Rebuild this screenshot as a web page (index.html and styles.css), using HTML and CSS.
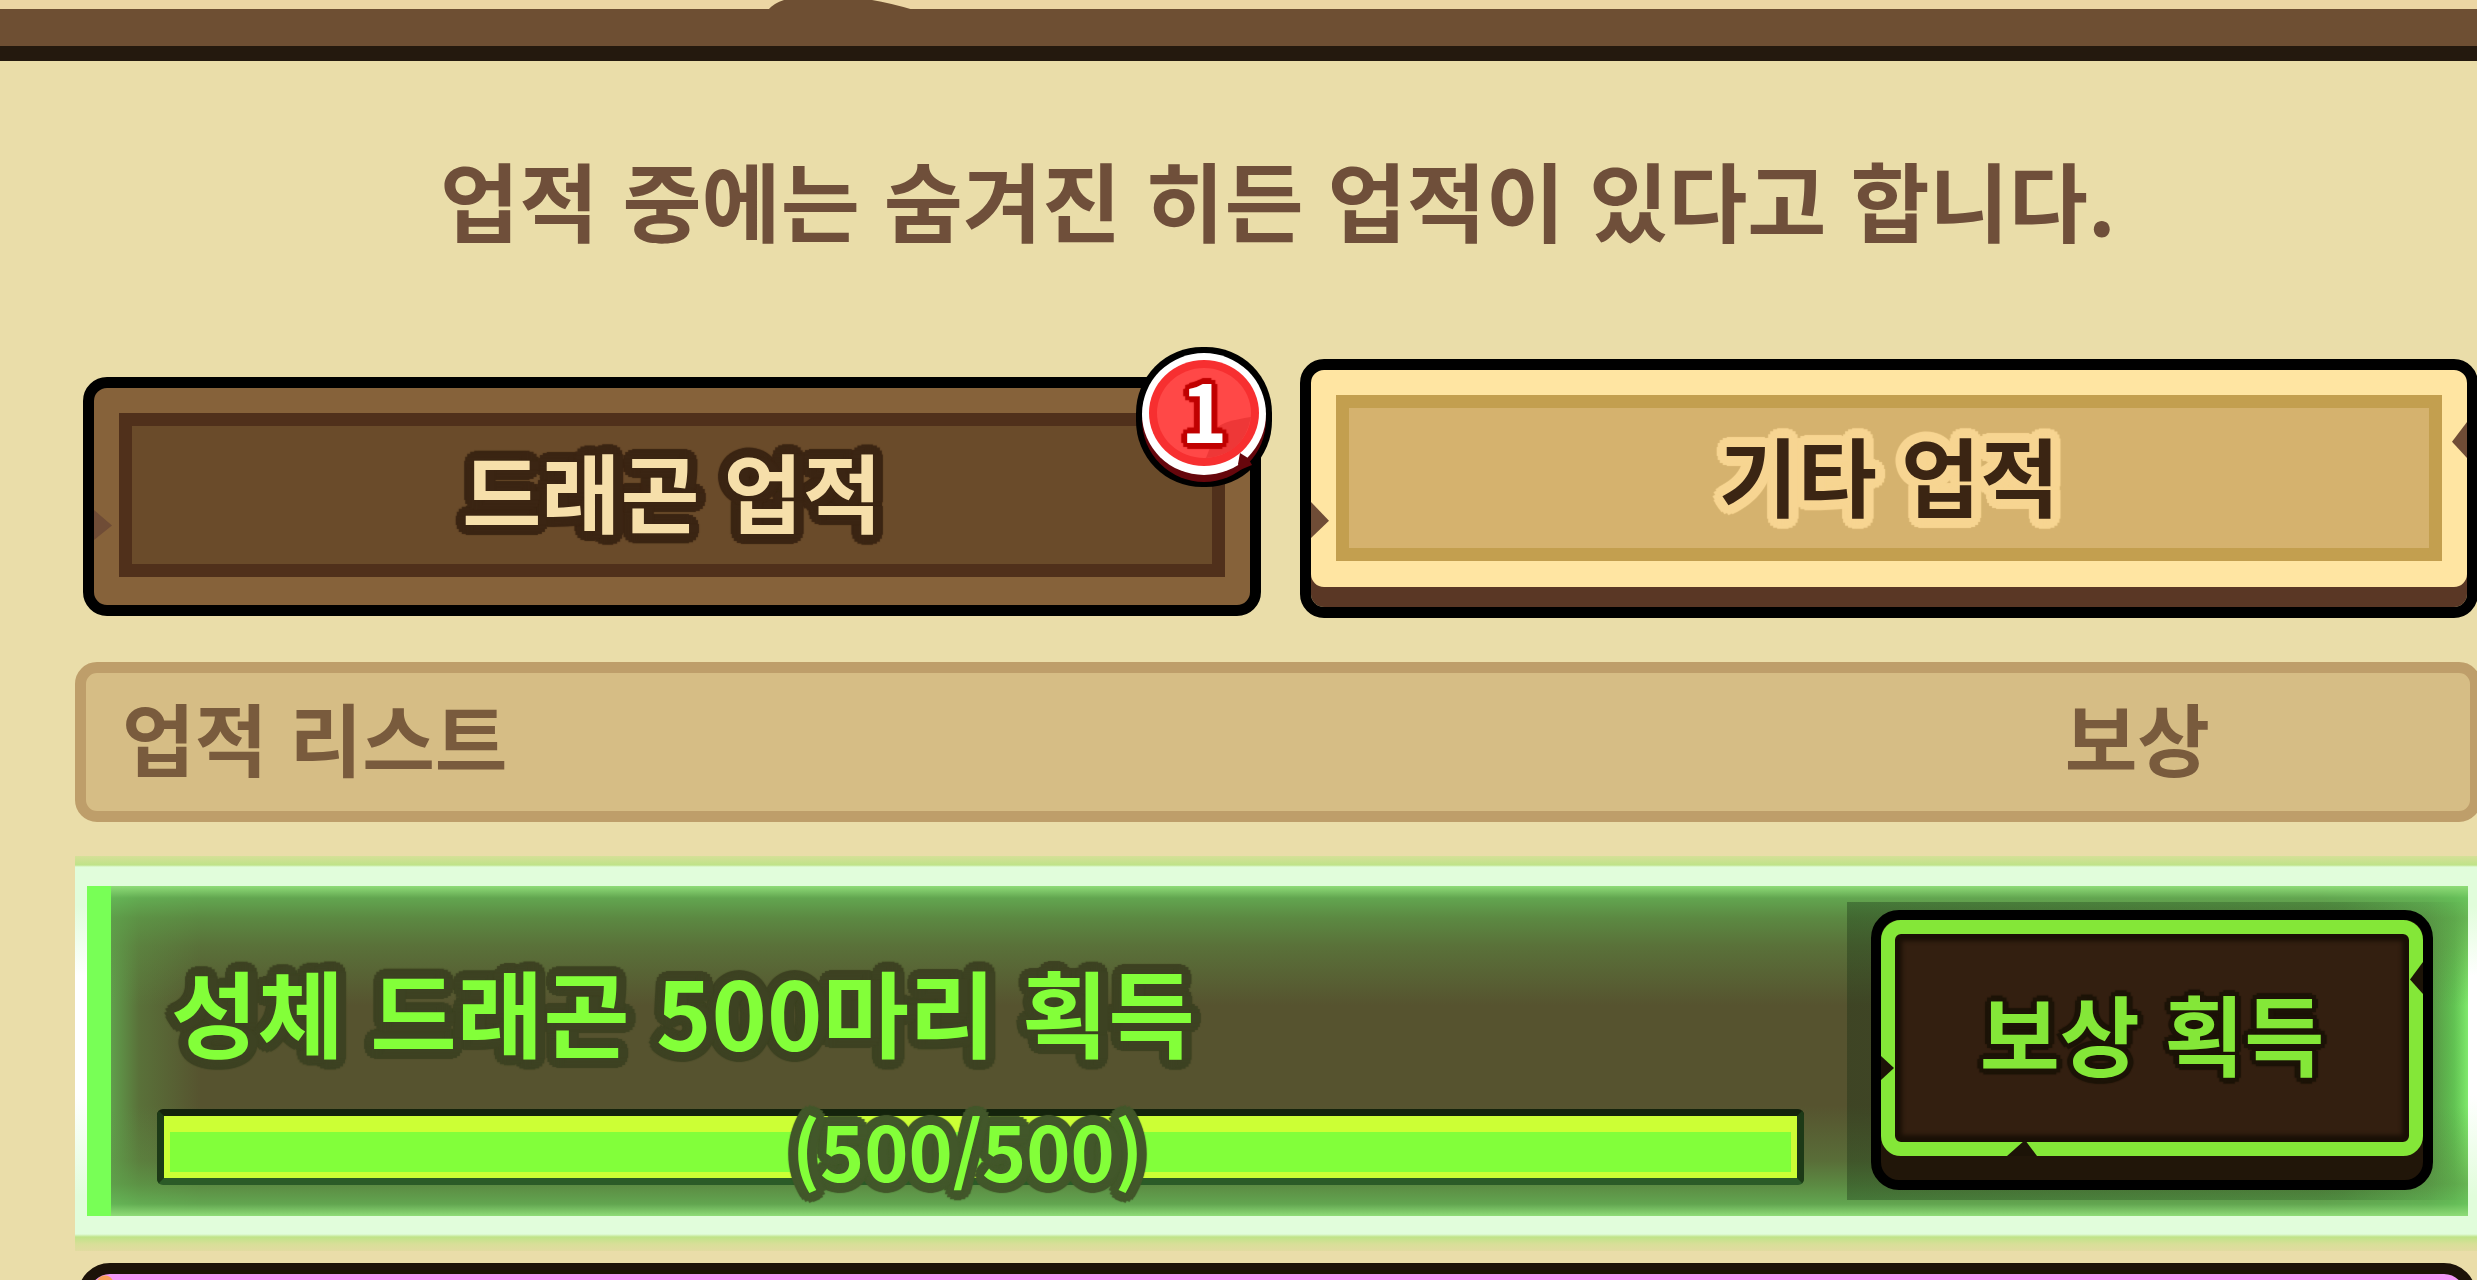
FILE: index.html
```
<!DOCTYPE html>
<html lang="ko">
<head>
    <meta charset="UTF-8">
    <meta name="viewport" content="width=device-width, initial-scale=1.0">
    <title>업적</title>
    <link rel="stylesheet" href="styles.css">
</head>
<body>
    <div class="screen">
        <header class="top-bar">
            <svg class="top-bump" width="150" height="10" viewBox="0 0 150 10">
                <path d="M0 10 Q6 3 16 0 H104 Q122 3 146 10 Z" fill="#6e4f33"/>
            </svg>
        </header>

        <main class="content">
            <p class="notice">업적 중에는 숨겨진 히든 업적이 있다고 합니다.</p>

            <div class="tabs" role="tablist">
                <button type="button" class="tab tab-dark" role="tab" aria-selected="false">
                    <span class="tab-face outline">드래곤 업적</span>
                    <span class="badge">
                        <svg class="badge-bg" width="136" height="140" viewBox="0 0 136 140">
                            <rect width="136" height="140" rx="66" fill="#000"/>
                            <ellipse cx="68" cy="73" rx="62" ry="62" fill="#66060c"/>
                            <ellipse cx="68" cy="67" rx="62" ry="61" fill="#fff"/>
                            <ellipse cx="68" cy="66" rx="55" ry="53" fill="#f72f30"/>
                            <ellipse cx="68" cy="66" rx="47" ry="45" fill="#ff4847"/>
                            <path d="M115 70 Q88 74 82 80 L70 111 Q108 108 115 70 Z" fill="#ee3737"/>
                            <path d="M104 106 L112 111 L116 118 L104 123 L102 117 Z" fill="#66060c"/>
                        </svg>
                        <span class="badge-num outline-thin">1</span>
                    </span>
                </button>
                <button type="button" class="tab tab-light" role="tab" aria-selected="true">
                    <span class="tab-face outline">기타 업적</span>
                </button>
            </div>

            <div class="list-head">
                <span>업적 리스트</span>
                <span class="head-reward">보상</span>
            </div>

            <section class="item">
                <div class="item-body">
                    <div class="item-info">
                        <h2 class="item-title outline">성체 드래곤 500마리 획득</h2>
                        <div class="progress" role="progressbar" aria-valuemin="0" aria-valuemax="500" aria-valuenow="500">
                            <div class="progress-fill" style="width: 100%"></div>
                            <span class="progress-text outline">(500/500)</span>
                        </div>
                    </div>
                    <div class="item-reward">
                        <button type="button" class="claim-btn">
                            <span class="claim-face outline-thin">보상 획득</span>
                        </button>
                    </div>
                </div>
            </section>

            <section class="next-item"></section>
        </main>
    </div>
</body>
</html>
```

FILE: styles.css
```
* {
    box-sizing: border-box;
    margin: 0;
    padding: 0;
}

body {
    font-family: 'Noto Sans CJK KR', 'Noto Sans', sans-serif;
    font-weight: 700;
    background-color: #eadda9;
}

button {
    font-family: inherit;
    font-weight: inherit;
    cursor: pointer;
}

/* rounded text outlines, coloured by --edge */
.outline {
    text-shadow:
        10px 0 1px var(--edge), 9px 4px 1px var(--edge),
        7px 7px 1px var(--edge), 4px 9px 1px var(--edge),
        0 10px 1px var(--edge), -4px 9px 1px var(--edge),
        -7px 7px 1px var(--edge), -9px 4px 1px var(--edge),
        -10px 0 1px var(--edge), -9px -4px 1px var(--edge),
        -7px -7px 1px var(--edge), -4px -9px 1px var(--edge),
        0 -10px 1px var(--edge), 4px -9px 1px var(--edge),
        7px -7px 1px var(--edge), 9px -4px 1px var(--edge),
        5px 0 var(--edge), -5px 0 var(--edge),
        0 5px var(--edge), 0 -5px var(--edge),
        4px 4px var(--edge), -4px 4px var(--edge),
        -4px -4px var(--edge), 4px -4px var(--edge);
}

.outline-thin {
    text-shadow:
        6px 0 1px var(--edge), 4px 4px 1px var(--edge),
        0 6px 1px var(--edge), -4px 4px 1px var(--edge),
        -6px 0 1px var(--edge), -4px -4px 1px var(--edge),
        0 -6px 1px var(--edge), 4px -4px 1px var(--edge);
}

.screen {
    height: 100vh;
    overflow: hidden;
}

.top-bar {
    position: relative;
    height: 61px;
    border-top: 9px solid #ecd6a4;
    border-bottom: 15px solid #24190e;
    background-color: #6e4f33;
}

.top-bump {
    position: absolute;
    top: -9px;
    left: 31%;
}

/* the list runs slightly past the right edge */
.content {
    margin: 0 -4px 0 75px;
}

.notice {
    padding: 74px 0 96px;
    font-size: 86px;
    line-height: 128px;
    text-align: center;
    color: #6f4f3a;
}

/* tabs */
.tabs {
    display: grid;
    grid-template-columns: 1fr 1fr;
    align-items: end;
    gap: 39px;
    padding: 0 3px 0 8px;
}

.tab {
    position: relative;
    padding: 25px;
    border: 11px solid #000;
    border-radius: 24px;
}

.tab-face {
    display: block;
    padding: 2px 0 10px;
    border: 13px solid;
    font-size: 86px;
    line-height: 128px;
}

.tab-dark {
    margin-bottom: 2px;
    padding-bottom: 28px;
    background-color: #86623a;
}

.tab-dark .tab-face {
    --edge: #3b2513;
    padding: 0 0 10px;
    border-color: #50301b;
    background-color: #6a4b2a;
    color: #f6dfaa;
}

.tab-light {
    padding-bottom: 46px;
    background-color: #ffe5a2;
    box-shadow: inset 0 -20px 0 #5a3725;
}

.tab-light .tab-face {
    --edge: #f7d592;
    border-color: #c39f4f;
    background-color: #d5b26e;
    color: #3b2513;
}

/* chips in the wood */
.tab::before,
.tab-light::after {
    content: '';
    position: absolute;
    top: 132px;
    left: 0;
    width: 18px;
    height: 36px;
    background-color: #6f4c36;
    clip-path: polygon(0 0, 100% 52%, 0 100%);
}

.tab-dark::before {
    top: 122px;
    height: 30px;
}

.tab-light::after {
    top: 52px;
    left: auto;
    right: 0;
    width: 15px;
    clip-path: polygon(100% 0, 0 55%, 100% 100%);
}

.badge {
    position: absolute;
    top: -41px;
    right: -22px;
    width: 136px;
    height: 140px;
}

.badge-bg {
    display: block;
}

.badge-num {
    --edge: #c00000;
    position: absolute;
    top: 0;
    left: 0;
    width: 100%;
    font-size: 79px;
    line-height: 124px;
    text-align: center;
    color: #fff;
}

/* list */
.list-head {
    display: flex;
    justify-content: space-between;
    margin-top: 44px;
    padding: 0 260px 10px 36px;
    border: 11px solid #be9e6a;
    border-radius: 22px;
    background-color: #d6bd85;
    font-size: 79px;
    line-height: 128px;
    color: #795b3d;
}

.item {
    margin-top: 34px;
    padding: 30px 13px 35px 12px;
    background: linear-gradient(to bottom,
        #d6e098 0,
        #bfe388 9px,
        #e1fddb 11px,
        #e1fddb 50px,
        #ffffff 120px,
        #ffffff 240px,
        #e1fddb 340px,
        #e1fddb 378px,
        #bfe388 381px,
        #d8df98 388px,
        #e1dba0 395px);
}

.item-body {
    display: flex;
    height: 330px;
    border-left: 24px solid #78ff56;
    background:
        linear-gradient(to bottom, #8fdc78 0, rgba(101, 186, 88, 0.8) 12px, rgba(94, 160, 74, 0.7) 32px, rgba(94, 150, 70, 0.45) 60px, transparent 120px),
        linear-gradient(to top, #8fdc78 0, rgba(101, 186, 88, 0.8) 12px, rgba(94, 160, 74, 0.7) 32px, rgba(94, 150, 70, 0.4) 55px, transparent 110px),
        linear-gradient(to right, rgba(101, 190, 88, 0.7) 0, rgba(94, 150, 70, 0.45) 28px, transparent 90px),
        linear-gradient(to left, #7ee86a 0, rgba(101, 210, 88, 0.9) 14px, rgba(94, 180, 80, 0.7) 40px, transparent 150px),
        #56532f;
}

.item-info {
    flex: 1;
    padding: 60px 43px 0 46px;
}

.item-title {
    --edge: #3d4222;
    padding-left: 14px;
    font-size: 94px;
    line-height: 128px;
    color: #83ff39;
}

.progress {
    position: relative;
    height: 76px;
    margin-top: 35px;
    border: 7px solid #1d3a17;
    border-color: #14230c #1d3a17 #2b5b27;
    border-radius: 6px;
    background-color: #1d3a17;
}

.progress-fill {
    height: 100%;
    border: 6px solid #ccff35;
    border-top-width: 16px;
    background-color: #82ff3a;
}

.progress-text {
    --edge: #42572a;
    position: absolute;
    top: -30px;
    left: 0;
    width: 100%;
    padding-right: 26px;
    font-size: 75px;
    line-height: 128px;
    text-align: center;
    color: #83ff39;
}

.item-reward {
    width: 621px;
    margin: 16px 0;
    padding: 8px 35px 8px 24px;
    background: linear-gradient(to right, rgba(16, 40, 16, 0.34), rgba(16, 60, 16, 0.22) 80%, transparent);
}

.claim-btn {
    position: relative;
    display: block;
    width: 100%;
    padding: 0 0 24px;
    border: 10px solid #000;
    border-radius: 28px;
    background-color: #211609;
}

.claim-face {
    --edge: #1c1307;
    display: block;
    padding: 34px 0 46px;
    border: 14px solid #84e738;
    border-radius: 20px;
    background-color: #331f10;
    box-shadow: inset 0 0 4px 7px #1a1006;
    font-size: 87px;
    line-height: 128px;
    color: #84e738;
}

.claim-btn::before,
.claim-btn::after {
    content: '';
    position: absolute;
    top: 136px;
    left: 0;
    width: 13px;
    height: 24px;
    background-color: #1c1307;
    clip-path: polygon(0 0, 100% 50%, 0 100%);
}

.claim-btn::after {
    top: 42px;
    left: auto;
    right: 0;
    height: 32px;
    clip-path: polygon(100% 0, 0 55%, 100% 100%);
}

.claim-face::after {
    content: '';
    position: absolute;
    bottom: 24px;
    left: 126px;
    width: 30px;
    height: 16px;
    background-color: #1c1307;
    clip-path: polygon(0 100%, 60% 0, 100% 100%);
}

.next-item {
    height: 395px;
    margin: 12px 5px 0 3px;
    border: 11px solid #1c1208;
    border-radius: 32px;
    background: radial-gradient(circle at 16px 10px, #f9a05a 8px, #f398f8 9px);
}
```
